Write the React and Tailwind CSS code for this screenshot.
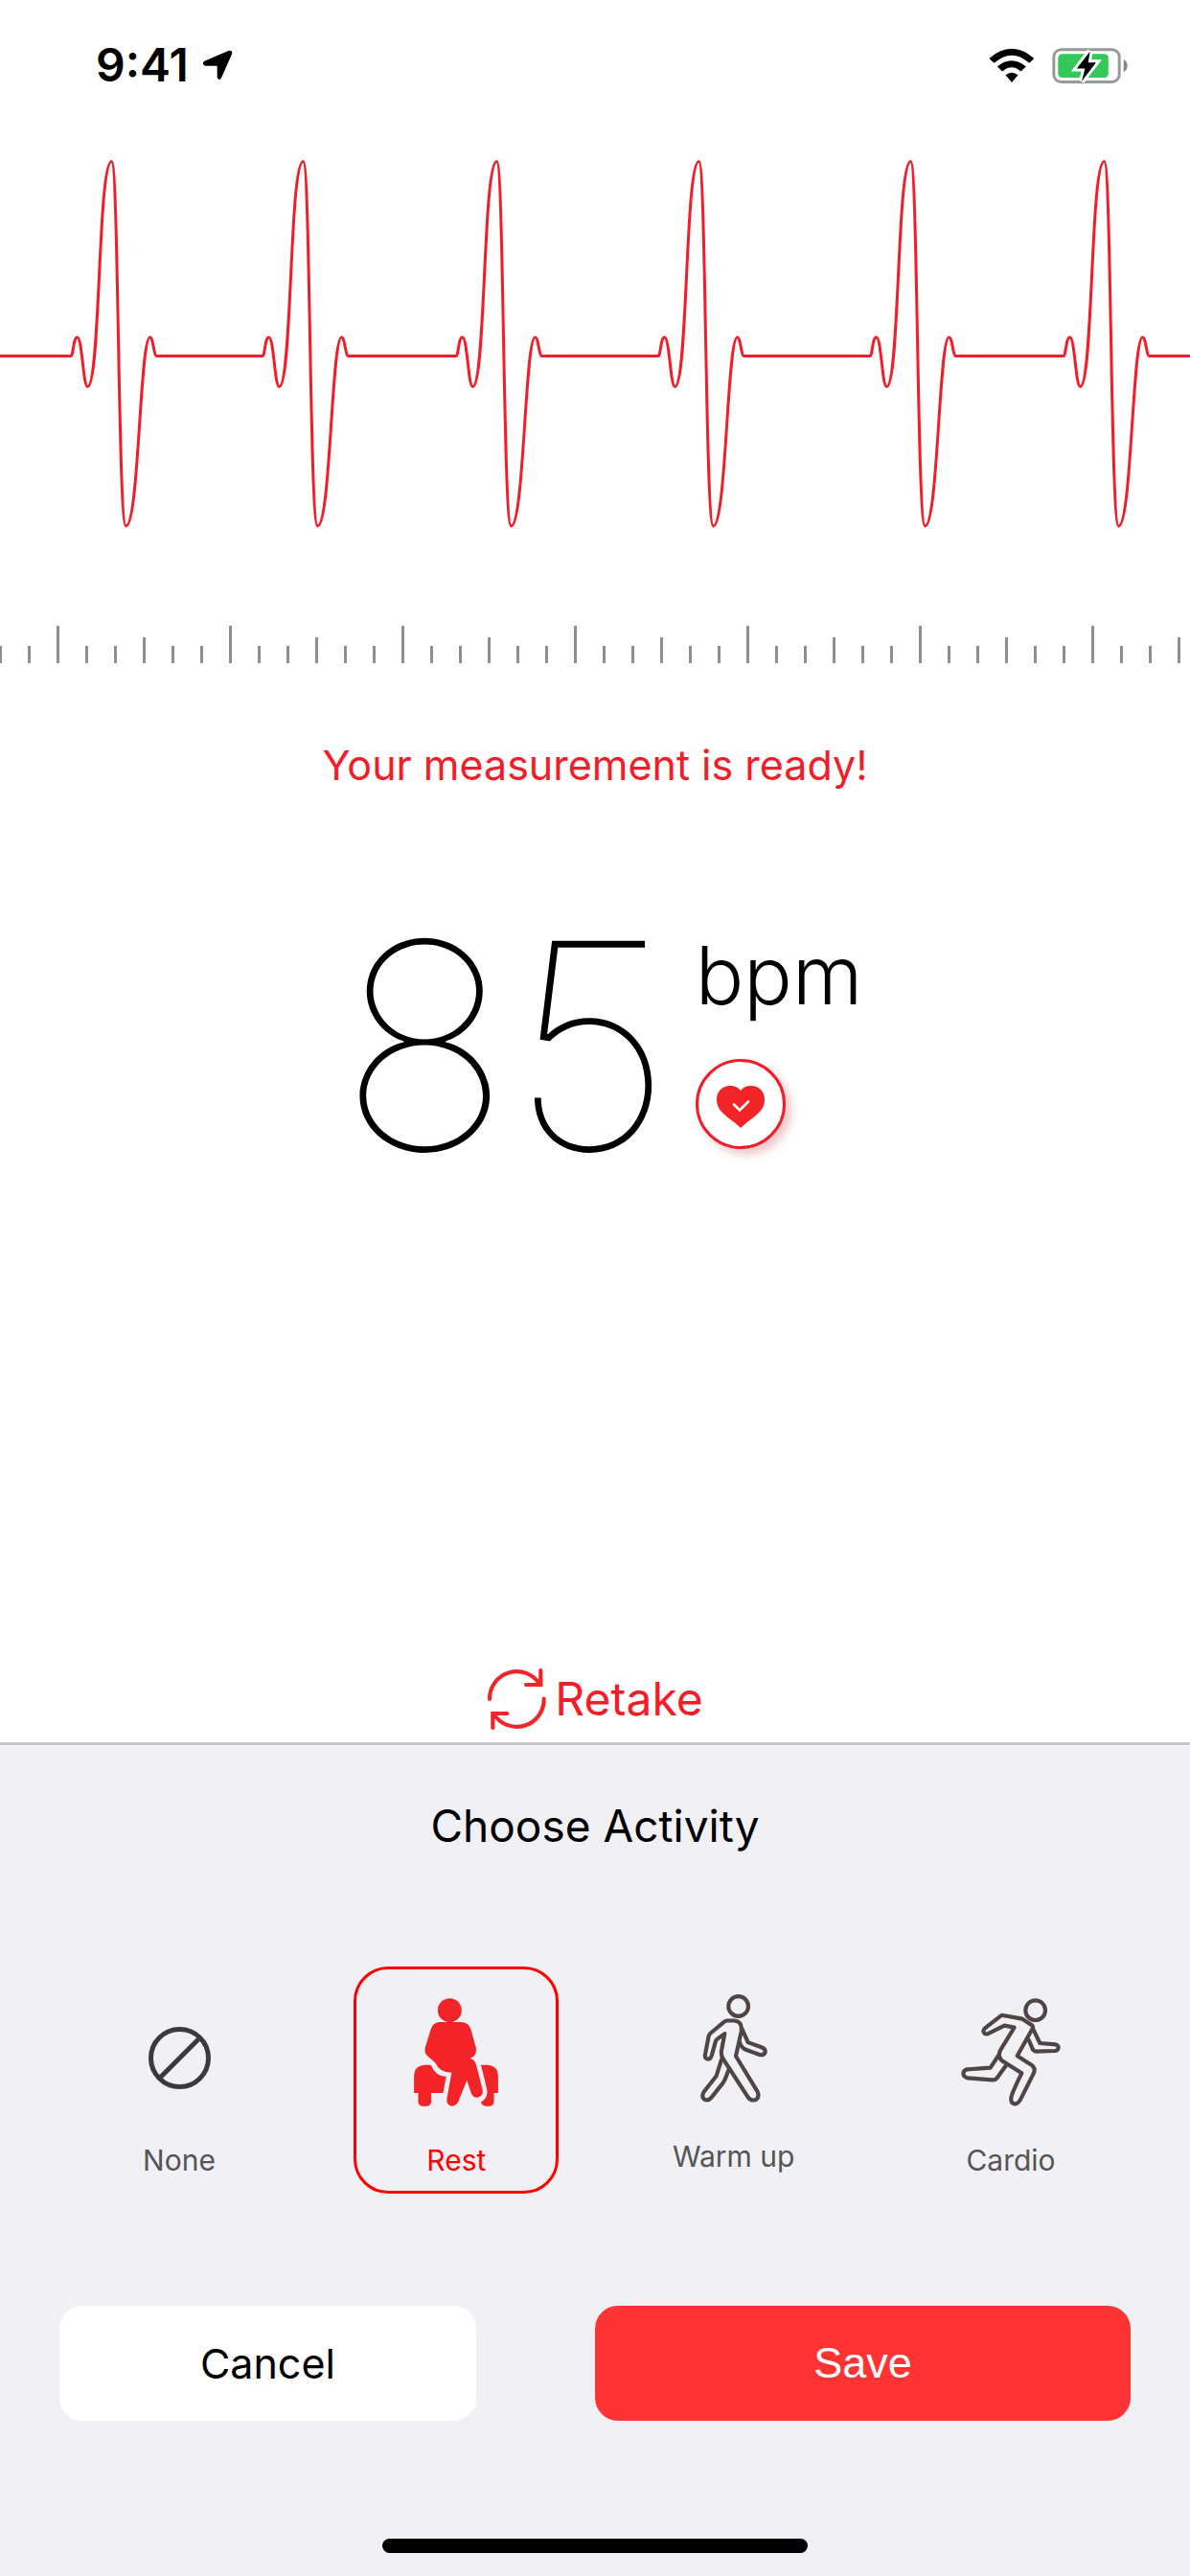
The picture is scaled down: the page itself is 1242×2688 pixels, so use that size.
import { useState } from 'react'

const BEATS = [0, 200, 402, 613, 834, 1036]
const TICKS = Array.from({ length: 42 }, (_, i) => i)

function tickHeight(i) {
  if (i % 6 === 2) return 39
  if (i % 6 === 5) return 27
  return 18
}

function LocationArrow() {
  return (
    <svg viewBox="450 94 98 98" className="size-8" aria-hidden="true">
      <path d="M457 130 L534 97 Q549 94 545 108 L511 184 Q504 194 498 183 V145 H460 Q447 140 457 130Z" />
    </svg>
  )
}

function Wifi() {
  return (
    <svg viewBox="94 86 146 110" className="h-[37px] w-12" aria-hidden="true">
      <path d="M95 118 Q167 56 238 118 L223 133 Q167 83 111 133Z" />
      <path d="M121 144 Q166 106 212 144 L196 159 Q166 133 137 159Z" />
      <path d="M147 171 Q167 155 187 171 L167 194Z" />
    </svg>
  )
}

function Battery() {
  return (
    <svg viewBox="294 86 240 112" className="h-[37px] w-20" aria-hidden="true">
      <rect x="298.5" y="91.5" width="207" height="102" rx="23" fill="none" stroke="#999" strokeWidth="9" />
      <rect x="312" y="105" width="159" height="75" rx="13" fill="#34c759" />
      <path d="M519 122 Q531 128 531 142 Q531 156 519 162Z" fill="#888" />
      <path
        d="M413 97 L371 151 H397 L387 191 L432 132 H407Z"
        stroke="#fff"
        strokeWidth="18"
        paintOrder="stroke"
      />
    </svg>
  )
}

function Ecg() {
  const beats = BEATS.map(
    (x) =>
      `H${x + 74} c2.5 0 2.5 -19.5 6.5 -19.5 c5.5 0 6 51.5 11 51.5 c13.5 0 10.5 -235 25 -235 c7.5 0 6.5 380.5 15 380.5 c13.5 0 14.5 -197 25 -197 c3.5 0 4 19.5 7 19.5`
  ).join(' ')

  return (
    <svg viewBox="0 140 1242 440" className="w-full" role="img" aria-label="Heart rate trace">
      <path d={`M0 371.5 ${beats} H1242`} fill="none" stroke="#f21d28" strokeWidth="3" />
    </svg>
  )
}

function Ruler() {
  return (
    <svg viewBox="0 0 1242 39" className="mt-[73px] w-full" aria-hidden="true">
      {TICKS.map((i) => (
        <rect key={i} x={i * 30 - 1} y={39 - tickHeight(i)} width="3" height={tickHeight(i)} fill="#8e8e93" />
      ))}
    </svg>
  )
}

function HeartCheck() {
  return (
    <svg viewBox="0 -6 50 50" className="size-[50px]" aria-hidden="true">
      <path
        d="M25 5 C22 1 18 0 14 0 C6 0 0 6 0 14 C0 20 2 24 6 28 C12 34 19 38 25 44 C31 38 38 34 44 28 C48 24 50 20 50 14 C50 6 44 0 36 0 C32 0 28 1 25 5Z"
        fill="#f22427"
      />
      <path d="M18 19.5 L24 25.5 L33 16.5" fill="none" stroke="#fff" strokeWidth="2.6" strokeLinecap="round" />
    </svg>
  )
}

function RetakeIcon() {
  return (
    <svg
      viewBox="90 90 189 198"
      className="h-[66px] w-[63px]"
      fill="none"
      stroke="#f22427"
      strokeWidth="12.5"
      strokeLinecap="round"
      aria-hidden="true"
    >
      <path d="M99 189 A85 85 0 0 1 257 144" />
      <path d="M259 99 V144 H213" />
      <path d="M269 188 A85 85 0 0 1 111 234" />
      <path d="M109 279 V234 H154" />
    </svg>
  )
}

function NoneIcon() {
  return (
    <svg viewBox="0 0 65 65" className="mb-[18px] size-[65px]" fill="none" stroke="#3a3a3c" strokeWidth="5" aria-hidden="true">
      <circle cx="32.5" cy="32.5" r="30" />
      <path d="M11.5 53.5 L53.5 11.5" />
    </svg>
  )
}

function RestIcon() {
  return (
    <svg viewBox="279 161 264 340" className="h-[113px] w-[88px]" fill="#f22427" aria-hidden="true">
      <circle cx="391" cy="199" r="37.5" />
      <path d="M358 236 H427 Q450 237 457 258 L474 318 Q477 343 455 350 Q469 354 474 370 L494 447 Q498 471 478 473 Q463 473 458 458 L445 419 L418 486 Q411 500 397 500 Q380 498 382 478 L397 395 Q358 394 346 364 L322 343 Q310 333 314 316 L332 258 Q338 238 358 236Z" />
      <path d="M279 459 V403 Q281 373 312 371 H332 Q346 407 380 408 L370 459 H333 V485 Q332 500 318 500 H307 Q293 500 292 485 V459Z" />
      <path d="M489 371 H510 Q541 373 543 403 V459 H530 V485 Q529 500 515 500 H505 Q492 500 489 487 Q508 478 509 456 Q508 445 489 371Z" />
    </svg>
  )
}

function WalkIcon() {
  return (
    <svg
      viewBox="156 89 210 338"
      className="h-[113px] w-[70px]"
      fill="none"
      stroke="#4f4545"
      strokeWidth="12.5"
      strokeLinejoin="round"
      strokeLinecap="round"
      aria-hidden="true"
    >
      <circle cx="275" cy="126" r="31" />
      <path d="M240 171 H262 Q288 173 284 205 L267 282 L334 392 Q342 408 331 418 Q316 424 306 412 L228 292 Q220 281 222 265 L232 212 L207 230 Q204 233 203 238 L191 281 Q187 293 178 291 Q169 289 171 277 L182 219 Q184 214 188 210 L230 175 Q235 171 240 171Z" />
      <path d="M287 198 L305 239 L349 255 Q360 260 359 269 Q355 280 343 278 L296 261 Q282 253 279 238" />
      <path d="M223 290 L206 344 L167 394 Q158 408 168 417 Q180 424 190 412 L226 367 Q231 360 233 355 L246 322" />
    </svg>
  )
}

function RunIcon() {
  return (
    <svg
      viewBox="971 105 312 339"
      className="h-[113px] w-[104px]"
      fill="none"
      stroke="#4f4545"
      strokeWidth="12.5"
      strokeLinejoin="round"
      strokeLinecap="round"
      aria-hidden="true"
    >
      <circle cx="1204" cy="143" r="31" />
      <path d="M1103 159 L1163 170 L1193 190 Q1198 194 1195 200 L1147 286 L1194 316 Q1204 324 1200 337 L1159 419 Q1150 437 1139 436 Q1126 434 1128 417 Q1130 402 1161 340 L1104 304 Q1085 293 1093 270 L1138 197 L1107 191 L1054 217 Q1043 220 1041 208 Q1042 203 1045 200 L1095 161 Q1099 158 1103 159Z" />
      <path d="M1197 202 L1218 246 L1268 250 Q1276 253 1276 260 Q1275 268 1266 270 L1206 272 Q1200 272 1196 266 L1183 236" />
      <path d="M1088 285 L1063 323 L990 328 Q978 332 978 342 Q980 353 992 355 L1070 361 Q1079 361 1084 355 L1112 316" />
    </svg>
  )
}

const ACTIVITIES = [
  { name: 'None', icon: NoneIcon, pad: 'pb-3' },
  { name: 'Rest', icon: RestIcon, pad: 'pb-3' },
  { name: 'Warm up', icon: WalkIcon, pad: 'pb-4' },
  { name: 'Cardio', icon: RunIcon, pad: 'pb-3' },
]

export default function App() {
  const [activity, setActivity] = useState('Rest')

  return (
    <div className="flex min-h-screen flex-col bg-white font-['Inter','Liberation_Sans',sans-serif] text-black">
      <header className="flex h-[140px] items-start justify-between pt-9 pr-16 pl-[100px]">
        <div className="flex h-16 items-center gap-3.5">
          <span className="text-[48px] leading-16 font-semibold">9:41</span>
          <LocationArrow />
        </div>
        <div className="flex h-16 items-center gap-[18px]">
          <Wifi />
          <Battery />
        </div>
      </header>

      <main className="flex flex-1 flex-col items-center">
        <Ecg />
        <Ruler />
        <p className="mt-19 text-[43px] leading-[60px] text-[#f21d28]">Your measurement is ready!</p>

        <div className="mt-[113px] flex items-start gap-6 pl-3">
          <span className="text-[300px] leading-[300px] font-thin">85</span>
          <div className="mt-[27px] flex flex-col items-start gap-[37px]">
            <span className="text-[84px] leading-[100px] font-light">bpm</span>
            <span className="flex size-[94px] items-center justify-center rounded-full border-3 border-[#f21d28] bg-white shadow-[6px_6px_8px_rgba(200,80,90,0.3)]">
              <HeartCheck />
            </span>
          </div>
        </div>

        <button type="button" className="mt-auto mb-3 flex items-center gap-2 text-[48px] leading-16 text-[#f21d28]">
          <RetakeIcon />
          Retake
        </button>
      </main>

      <section className="flex flex-col border-t-3 border-[#c6c6c8] bg-[#f1f0f5] pt-[54px] pb-6">
        <h2 className="text-center text-[46px] leading-[60px]">Choose Activity</h2>

        <div className="mt-[117px] flex justify-between px-20">
          {ACTIVITIES.map(({ name, icon: Icon, pad }) => {
            const selected = name === activity
            return (
              <button
                key={name}
                type="button"
                aria-pressed={selected}
                onClick={() => setActivity(name)}
                className={`flex h-[237px] w-[214px] flex-col items-center justify-end gap-9 rounded-[36px] border-3 text-[30px] leading-10 ${pad} ${
                  selected ? 'border-[#ff0000] text-[#ff0000]' : 'border-transparent text-[#555]'
                }`}
              >
                <Icon />
                {name}
              </button>
            )
          })}
        </div>

        <div className="mt-[117px] grid grid-cols-[7fr_2fr_9fr] px-[62px]">
          <button type="button" className="h-[120px] rounded-3xl bg-white text-[43px]">
            Cancel
          </button>
          <button
            type="button"
            className="col-start-3 h-[120px] rounded-3xl bg-[#ff3333] font-['Liberation_Sans',sans-serif] text-[45px] text-white"
          >
            Save
          </button>
        </div>

        <div className="mt-[123px] h-[15px] w-[444px] self-center rounded-full bg-black" />
      </section>
    </div>
  )
}
